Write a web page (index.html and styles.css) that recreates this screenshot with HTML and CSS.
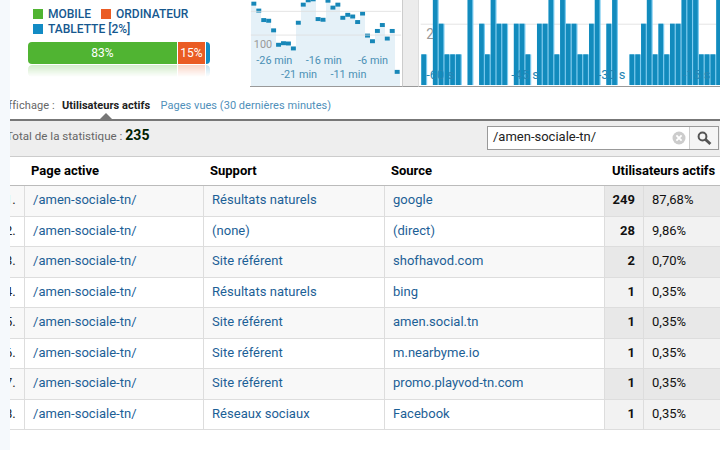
FILE: index.html
```html
<!DOCTYPE html>
<html lang="fr">
<head>
    <meta charset="UTF-8">
    <meta name="viewport" content="width=device-width, initial-scale=1.0">
    <title>Temps réel</title>
    <link rel="stylesheet" href="styles.css">
</head>
<body>
    <div class="report">
        <div class="overview">
            <div class="devices">
                <div class="legend">
                    <span class="legend-item"><i class="swatch green"></i>MOBILE</span>
                    <span class="legend-item"><i class="swatch orange"></i>ORDINATEUR</span>
                    <span class="legend-item"><i class="swatch blue"></i>TABLETTE [2%]</span>
                </div>
                <div class="device-bar">
                    <span class="green">83%</span>
                    <span class="orange">15%</span>
                    <span class="blue"></span>
                </div>
                <div class="device-bar reflection">
                    <span class="green"></span>
                    <span class="orange"></span>
                    <span class="blue"></span>
                </div>
            </div>
            <svg class="chart-minutes" width="152" height="87" viewBox="0 0 152 87">
                <g id="minutes"></g>
                <path class="grid" d="M0 11.5H152M0 35.5H152"/>
                <g class="label">
                    <text class="scale" x="3" y="48.5">100</text>
                    <text x="5.5" y="64.5">-26 min</text>
                    <text x="55.5" y="64.5">-16 min</text>
                    <text x="108.5" y="64.5">-6 min</text>
                    <text x="30.5" y="78.5">-21 min</text>
                    <text x="80.5" y="78.5">-11 min</text>
                </g>
            </svg>
            <div class="divider"></div>
            <svg class="chart-seconds" width="301" height="87" viewBox="0 0 301 87">
                <path class="grid" d="M0 24.5H301"/>
                <text class="scale" x="5.5" y="39">2</text>
                <g id="seconds"></g>
                <g class="label">
                    <text x="5.5" y="79.5">-60 s</text>
                    <text x="91.5" y="79.5">-45 s</text>
                    <text x="179" y="79.5">-30 s</text>
                    <text x="265" y="79.5">-15 s</text>
                </g>
            </svg>
        </div>

        <div class="tabs">
            <span class="tabs-label">Affichage :</span>
            <span class="tab active">Utilisateurs actifs</span>
            <span class="tab">Pages vues (30 dernières minutes)</span>
        </div>

        <div class="toolbar">
            <div class="total"><span>Total de la statistique :</span> <b>235</b></div>
            <div class="search">
                <div class="search-field">
                    /amen-sociale-tn/
                    <svg width="14" height="14" viewBox="0 0 14 14">
                        <circle cx="7" cy="7" r="6.5" fill="#ccc"/>
                        <path d="M4.4 4.4l5.2 5.2M9.6 4.4l-5.2 5.2" stroke="#fff" stroke-width="1.8"/>
                    </svg>
                </div>
                <div class="search-button">
                    <svg width="15" height="15" viewBox="0 0 15 15">
                        <circle cx="5.5" cy="5.5" r="3.9" fill="none" stroke="#555" stroke-width="2"/>
                        <path d="M8.4 8.4l5 4.6" stroke="#555" stroke-width="2.8"/>
                    </svg>
                </div>
            </div>
        </div>

        <table class="pages">
            <colgroup>
                <col class="col-num"><col class="col-page"><col class="col-medium">
                <col class="col-source"><col class="col-users"><col class="col-percent">
            </colgroup>
            <thead>
                <tr><th></th><th>Page active</th><th>Support</th><th>Source</th><th colspan="2" class="users-head">Utilisateurs actifs</th></tr>
            </thead>
            <tbody>
                <tr><td>1.</td><td>/amen-sociale-tn/</td><td>Résultats naturels</td><td>google</td><td>249</td><td>87,68%</td></tr>
                <tr><td>2.</td><td>/amen-sociale-tn/</td><td>(none)</td><td>(direct)</td><td>28</td><td>9,86%</td></tr>
                <tr><td>3.</td><td>/amen-sociale-tn/</td><td>Site référent</td><td>shofhavod.com</td><td>2</td><td>0,70%</td></tr>
                <tr><td>4.</td><td>/amen-sociale-tn/</td><td>Résultats naturels</td><td>bing</td><td>1</td><td>0,35%</td></tr>
                <tr><td>5.</td><td>/amen-sociale-tn/</td><td>Site référent</td><td>amen.social.tn</td><td>1</td><td>0,35%</td></tr>
                <tr><td>6.</td><td>/amen-sociale-tn/</td><td>Site référent</td><td>m.nearbyme.io</td><td>1</td><td>0,35%</td></tr>
                <tr><td>7.</td><td>/amen-sociale-tn/</td><td>Site référent</td><td>promo.playvod-tn.com</td><td>1</td><td>0,35%</td></tr>
                <tr><td>8.</td><td>/amen-sociale-tn/</td><td>Réseaux sociaux</td><td>Facebook</td><td>1</td><td>0,35%</td></tr>
            </tbody>
        </table>
    </div>
<script>
// centre of each minute marker, in px
const minutes = [3.7, 10.7, 20.3, 21, 30.7, 45.3, 43.7, 44, 49, 23, 4.7, 0.3, -0.7, 19.3, 20,
  0.7, 7.7, 4.7, 18, 15, 16.7, 22.3, 13.7, 36, 41.7, 31.3, 25.3, 39, 31.3, 72.7];
let areas = '', marks = '';
minutes.forEach((y, i) => {
  const x = i * 5 + 0.5;
  areas += `<rect class="area" x="${x}" y="${y}" width="5" height="${87 - y}"/>`;
  marks += `<rect class="mark" x="${x}" y="${y - 2}" width="5" height="4"/>`;
});
document.getElementById('minutes').innerHTML = areas + marks;

// page views per second, 3 = above the visible part
const seconds = '1032111030213220221022313221123023001123121223331113';
const tops = [87, 55, 24, -5];
const step = 5.85;
let bars = '';
[...seconds].forEach((v, i) => {
  const x = i * step + 0.6;
  const y = tops[v];
  if (v === '0') return;
  bars += `<rect class="edge" x="${x}" y="${y}" width="5.9" height="${86 - y}"/>`;
  bars += `<rect class="bar" x="${x}" y="${y}" width="4.7" height="${86 - y}"/>`;
});
document.getElementById('seconds').innerHTML = bars;
</script>
</body>
</html>
```
FILE: styles.css
```css
* {
    margin: 0;
    padding: 0;
    box-sizing: border-box;
}

body {
    background-color: #f5f9fc;
    font-family: Roboto, sans-serif;
    font-size: 13px;
    color: #222;
    overflow: hidden;
}

.report {
    margin-left: 10px;
    width: 710px;
    height: 450px;
    background-color: white;
    overflow: hidden;
}

.overview {
    display: flex;
    height: 95px;
}

.devices {
    width: 240px;
    padding: 7px 0 0 18px;
}

.legend {
    display: flex;
    flex-wrap: wrap;
    column-gap: 10px;
    height: 35px;
    align-content: flex-start;
    width: 190px;
    padding-left: 5px;
    color: #15588f;
    font-size: 12px;
    font-weight: 500;
    line-height: 15px;
}

.legend-item {
    display: flex;
    align-items: center;
}

.swatch {
    width: 10px;
    height: 10px;
    margin: -1px 5px 0 0;
}

.green {
    background-color: #50b432;
}

.orange {
    background-color: #ea5c24;
}

.blue {
    background-color: #128bc4;
}

.device-bar {
    display: grid;
    grid-template-columns: 149px 27px 4px;
    gap: 1px;
    width: 182px;
    height: 22px;
    border-radius: 4px;
    overflow: hidden;
    color: white;
    font-size: 12px;
    line-height: 22px;
    text-align: center;
}

.reflection {
    height: 12px;
    margin-top: 1px;
    opacity: 0.25;
    -webkit-mask-image: linear-gradient(black, transparent);
    mask-image: linear-gradient(black, transparent);
}

.chart-minutes,
.chart-seconds {
    display: block;
    border-bottom: 1px solid #999;
    font-size: 11px;
}

.divider {
    width: 17px;
    height: 87px;
    background-color: #ececec;
    border-left: 1px solid #ccc;
    border-right: 1px solid #ddd;
    border-bottom: 1px solid #999;
}

.grid {
    stroke: #ddd;
    stroke-opacity: 0.8;
}

.area {
    fill: #e5f1f8;
    shape-rendering: crispEdges;
}

.mark {
    fill: #1787b8;
}

.bar {
    fill: #128bbd;
}

.edge {
    fill: #7ccbf0;
}

.label {
    fill: #4a90b5;
}

.chart-seconds .label {
    fill: #2686b4;
    font-size: 13px;
}

.label .scale,
.scale {
    fill: #999;
}

.chart-seconds .scale {
    font-size: 14px;
}

.tabs {
    display: flex;
    height: 26px;
    margin-left: -9px;
    padding-top: 3px;
    border-bottom: 2px solid #777;
    font-size: 11px;
    line-height: 15px;
    white-space: nowrap;
}

.tabs-label {
    width: 61px;
    color: #666;
    letter-spacing: 0.1px;
}

.tab {
    color: #4f8fba;
    letter-spacing: 0.04px;
}

.tab.active {
    width: 88px;
    margin-right: 10.5px;
    color: #222;
    font-weight: 700;
}

.tab.active::after {
    content: "";
    display: block;
    width: 0;
    margin: 0 auto;
    border: 6px solid transparent;
    border-top: 0;
    border-bottom-color: #777;
}

.toolbar {
    display: flex;
    justify-content: space-between;
    height: 36px;
    padding: 5px 1px 0 0;
    background-color: #eee;
    border-bottom: 1px solid #ccc;
}

.total {
    margin-left: -4px;
    color: #666;
    font-size: 11.6px;
    line-height: 19px;
}

.total b {
    color: #020;
    font-size: 14px;
}

.search {
    display: flex;
    width: 232px;
    height: 24px;
    border: 1px solid #999;
    background-color: white;
}

.search-field {
    flex: 1;
    display: flex;
    align-items: center;
    justify-content: space-between;
    padding: 0 3px 3px 5px;
}

.search-field svg {
    margin-top: 2px;
}

.search-button {
    width: 29px;
    padding: 4px 0 0 7px;
    background-color: #f5f5f5;
    border-left: 1px solid #ccc;
}

.pages {
    width: 720px;
    table-layout: fixed;
    border-collapse: separate;
    border-spacing: 0;
}

.col-num {
    width: 15px;
}

.col-page {
    width: 179px;
}

.col-medium {
    width: 181px;
}

.col-source {
    width: 220px;
}

.col-users {
    width: 39px;
}

.pages th {
    height: 29px;
    padding: 0 0 1px 6px;
    border-bottom: 1px solid #bbb;
    color: #000;
    text-align: left;
    white-space: nowrap;
}

.pages .users-head {
    padding-left: 7px;
}

.pages td {
    height: 30.5px;
    padding: 0 0 2px 8px;
    border-bottom: 1px solid #ddd;
    border-right: 1px solid #ddd;
    color: #1c6096;
    letter-spacing: 0.03px;
    white-space: nowrap;
}

.pages tr:nth-child(odd) td {
    background-color: #f8f8f8;
}

.pages td:first-child {
    padding: 0 0 2px;
    color: #222;
    text-indent: -5px;
}

.pages td:nth-child(n+5) {
    background-color: #f2f2f2;
    color: #111;
}

.pages tr:nth-child(odd) td:nth-child(n+5) {
    background-color: #e8e8e8;
}

.pages td:nth-child(5) {
    padding: 0 8px 2px 0;
    font-weight: 700;
    text-align: right;
}
```
